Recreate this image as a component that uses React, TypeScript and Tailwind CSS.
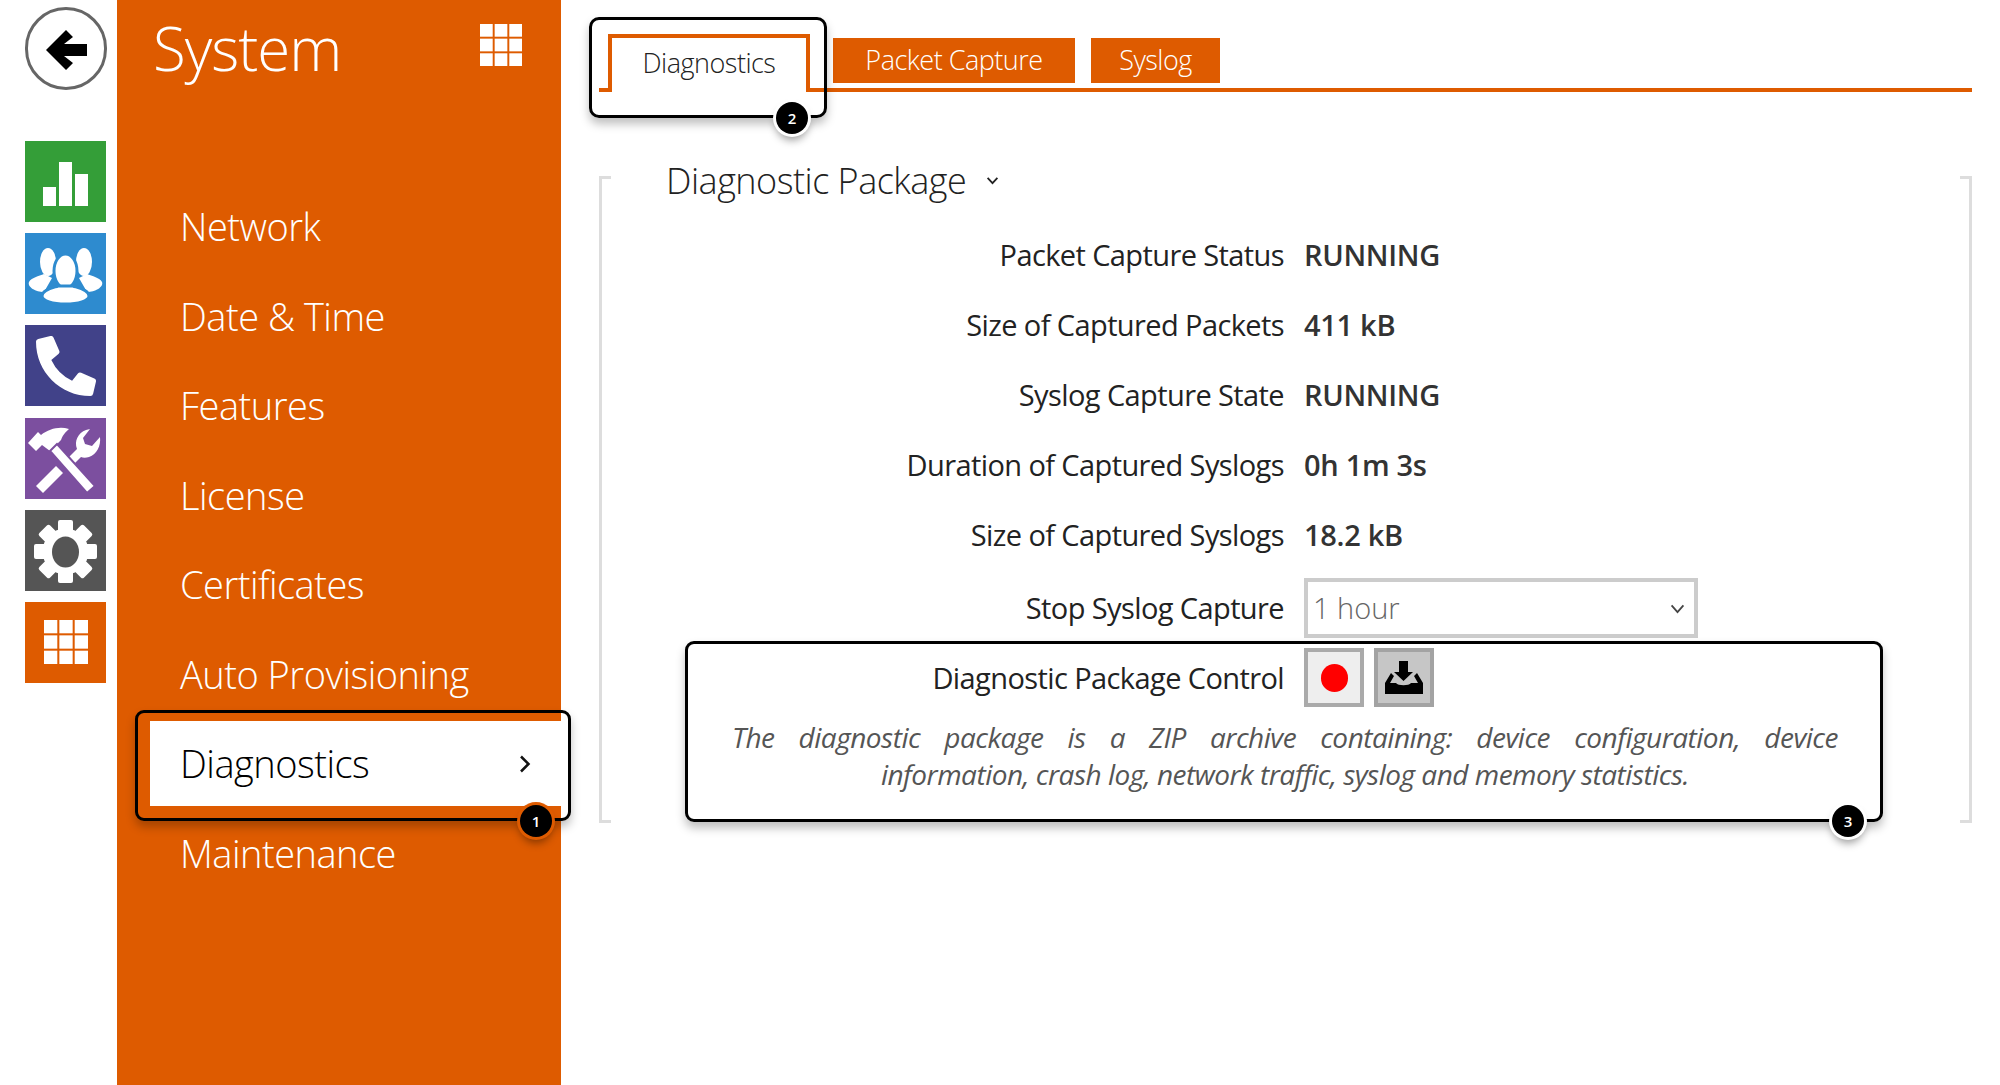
import React from "react";
import { FaPhoneAlt } from "react-icons/fa";

const menuItems = [
  "Network",
  "Date & Time",
  "Features",
  "License",
  "Certificates",
  "Auto Provisioning",
  "Diagnostics",
  "Maintenance",
];

const statusRows = [
  { label: "Packet Capture Status", value: "RUNNING" },
  { label: "Size of Captured Packets", value: "411 kB" },
  { label: "Syslog Capture State", value: "RUNNING" },
  { label: "Duration of Captured Syslogs", value: "0h 1m 3s" },
  { label: "Size of Captured Syslogs", value: "18.2 kB" },
];

const GridIcon = ({ className }: { className: string }) => (
  <svg viewBox="0 0 43 43" className={className} fill="#fff">
    {[0, 15, 30].map((y) =>
      [0, 15, 30].map((x) => <rect key={`${x}-${y}`} x={x} y={y} width="13" height="13" />)
    )}
  </svg>
);

const BackButton = () => (
  <div className="w-[82px] h-[83px] rounded-full border-[3px] border-[#666] bg-white">
    <svg viewBox="0 0 76 77" className="w-full h-full" fill="#000">
      <polygon points="18,40 38,20 45,27 36,34 59,34 59,46 36,46 45,53 38,60" />
    </svg>
  </div>
);

const Tile = ({ color, children }: { color: string; children: React.ReactNode }) => (
  <div className={`w-[81px] h-[81px] flex items-center justify-center ${color}`}>{children}</div>
);

const Badge = ({ n, className, ring }: { n: number; className: string; ring: string }) => (
  <div
    className={`absolute w-8 h-8 rounded-full bg-black text-white flex items-center justify-center text-[15px] font-semibold ${ring} ${className}`}
  >
    {n}
  </div>
);

const Row = ({ label, children, className }: { label: string; children: React.ReactNode; className: string }) => (
  <div className={`flex items-center ${className}`}>
    <div className="w-[685px] pr-0 text-right text-[29px] tracking-[-0.6px] text-[#222] whitespace-nowrap">{label}</div>
    <div className="ml-5">{children}</div>
  </div>
);

export default function App() {
  return (
    <div
      className="relative flex w-[2000px] h-[1085px] bg-white overflow-hidden"
      style={{ fontFamily: '"Open Sans", "Noto Sans", sans-serif' }}
    >
      {/* rail */}
      <div className="w-[117px] shrink-0 pl-[25px] pt-[7px]">
        <BackButton />
        <div className="mt-[51px] flex flex-col gap-[11.2px]">
          <Tile color="bg-[#349e38]">
            <svg viewBox="0 0 81 81" className="w-full h-full" fill="#fff">
              <rect x="18" y="46" width="13" height="19" />
              <rect x="34" y="21" width="13" height="44" />
              <rect x="50" y="33" width="13" height="32" />
            </svg>
          </Tile>
          <Tile color="bg-[#2e8bcf]">
            <svg viewBox="0 0 81 81" className="w-full h-full" fill="#fff">
              <ellipse cx="23" cy="29" rx="8" ry="14" />
              <ellipse cx="59" cy="29" rx="8" ry="14" />
              <path d="M4 49c2-4 10-6 15-8l8 4-8 14c-8 0-17-5-15-10z" />
              <path d="M77 49c-2-4-10-6-15-8l-8 4 8 14c8 0 17-5 15-10z" />
              <ellipse cx="40.5" cy="38" rx="11.5" ry="17" stroke="#2e8bcf" strokeWidth="3" />
              <path
                d="M17 63c0-6 10-8 16-10h15c6 2 16 4 16 10 0 5-11 8-23.500 8S17 68 17 63z"
                stroke="#2e8bcf"
                strokeWidth="3"
              />
            </svg>
          </Tile>
          <Tile color="bg-[#414289]">
            <FaPhoneAlt className="w-[60px] h-[60px] text-white -scale-x-100 rotate-90" />
          </Tile>
          <Tile color="bg-[#7c4f9f]">
            <svg viewBox="0 0 81 81" className="w-full h-full" fill="#fff">
              <path d="M44 39l8-8c-3-8 1-16 9-19l4-1-7 9 2 6 7 2 8-9c1 9-3 17-11 20-3 1-6 1-8 0l-8 8z" />
              <path d="M31 48l7 7-20 20-7-7z" />
              <path d="M3 25l8 8 6-6 8 6 11-11c2-6 6-9 8-11-10-3-20 0-28 6l-3-3z" />
              <path d="M25 33l7-7 38 42-8 7z" stroke="#7c4f9f" strokeWidth="2" />
            </svg>
          </Tile>
          <Tile color="bg-[#555555]">
            <svg viewBox="0 0 81 81" className="w-full h-full" fill="#fff">
              {[0, 45, 90, 135, 180, 225, 270, 315].map((deg) => (
                <rect key={deg} x="33" y="10" width="15" height="16" rx="2" transform={`rotate(${deg} 40.5 41.500)`} />
              ))}
              <circle cx="40.5" cy="41.500" r="23" />
              <ellipse cx="40.5" cy="42" rx="13.500" ry="15.500" fill="#555555" />
            </svg>
          </Tile>
          <Tile color="bg-[#de5b00]">
            <GridIcon className="w-[44px] h-[44px]" />
          </Tile>
        </div>
      </div>

      {/* system menu */}
      <div className="w-[444px] shrink-0 bg-[#de5b00]">
        <div className="h-[184px] flex items-start justify-between pl-9 pr-[39px]">
          <div className="text-[60px] leading-[96px] font-light text-white tracking-[-1px]">System</div>
          <GridIcon className="w-[42px] h-[42px] mt-6" />
        </div>
        <div className="pl-[33px] flex flex-col gap-[4.5px]">
          {menuItems.map((item) => (
            <div
              key={item}
              className={`h-[85px] pl-[30px] pr-[30px] flex items-center justify-between text-[38px] font-light tracking-[-0.5px] ${
                item === "Diagnostics" ? "bg-white text-black" : "text-white"
              }`}
            >
              {item}
              {item === "Diagnostics" && (
                <svg viewBox="0 0 12 18" className="w-3 h-[18px]" fill="none" stroke="#111" strokeWidth="2.5">
                  <polyline points="2,1.500 9.500,9 2,16.500" />
                </svg>
              )}
            </div>
          ))}
        </div>
      </div>

      {/* content */}
      <div className="flex-1 min-w-0 pl-[38px] pr-7 pt-[34px]">
        <div className="flex items-start h-[58px] border-b-4 border-[#de5b00] pl-[9px]">
          <div className="relative h-[58px] w-[202px] bg-white border-4 border-b-0 border-[#de5b00] flex justify-center pt-[5px] text-[27px] font-light tracking-[-0.5px] text-[#222]">
            Diagnostics
          </div>
          <div className="ml-[23px] mt-1 h-[45px] w-[242px] bg-[#de5b00] flex items-center justify-center text-[27px] font-light tracking-[-0.5px] text-white">
            Packet Capture
          </div>
          <div className="ml-4 mt-1 h-[45px] w-[129px] bg-[#de5b00] flex items-center justify-center text-[27px] font-light tracking-[-0.5px] text-white">
            Syslog
          </div>
        </div>

        <div className="relative mt-[50px] h-[681px]">
          <div className="absolute left-0 top-[34px] bottom-0 w-3 border-[3px] border-r-0 border-[#ddd]" />
          <div className="absolute right-0 top-[34px] bottom-0 w-3 border-[3px] border-l-0 border-[#ddd]" />

          <div className="h-[78px] pl-[67px] flex items-center text-[36px] font-light tracking-[-0.5px] text-[#222]">
            Diagnostic Package
            <svg viewBox="0 0 14 9" className="ml-5 w-[13px] h-2" fill="none" stroke="#222" strokeWidth="2">
              <polyline points="1.500,1 7,7 12.500,1" />
            </svg>
          </div>

          {statusRows.map((row) => (
            <Row key={row.label} label={row.label} className="h-[70px]">
              <span className="text-[29px] font-semibold text-[#333] tracking-[-0.3px]">{row.value}</span>
            </Row>
          ))}

          <Row label="Stop Syslog Capture" className="h-[60px] mt-2">
            <div className="relative w-[394px] h-[60px]">
              <select className="w-full h-full appearance-none bg-white border-4 border-[#cccccc] pl-[5px] text-[29px] font-light text-[#666] outline-none">
                <option>1 hour</option>
              </select>
              <svg
                viewBox="0 0 16 11"
                className="absolute right-[13px] top-[26px] w-[15px] h-[10px] pointer-events-none"
                fill="none"
                stroke="#444"
                strokeWidth="2"
              >
                <polyline points="1.500,1.500 8,9 14.500,1.500" />
              </svg>
            </div>
          </Row>

          <Row label="Diagnostic Package Control" className="h-[59px] mt-[10px]">
            <div className="flex gap-[10px]">
              <div className="w-[60px] h-[59px] bg-[#eeeeee] border-4 border-[#aaaaaa] flex items-center justify-center">
                <div className="w-[27px] h-[28px] rounded-full bg-[#ff0000]" />
              </div>
              <div className="w-[60px] h-[59px] bg-[#c6c6c6] border-4 border-[#a3a3a3] flex items-center justify-center">
                <svg viewBox="0 0 38 33" className="w-[38px] h-[33px]" fill="#000">
                  <polygon points="14,0 23,0 23,11 28,11 18.500,20 9,11 14,11" />
                  <path d="M6 12l3 3-4 7h6c2 3 13 3 15 0h7l-4-7 3-3 6 10v11H0V22z" />
                </svg>
              </div>
            </div>
          </Row>

          <p className="mt-3 ml-[133px] w-[1106px] text-[28px] leading-[37px] italic tracking-[-0.5px] text-[#555] text-justify [text-align-last:center]">
            <span className="block [text-align-last:justify]">
              The diagnostic package is a ZIP archive containing: device configuration, device
            </span>
            <span className="block">information, crash log, network traffic, syslog and memory statistics.</span>
          </p>
        </div>
      </div>

      {/* numbered callouts */}
      <div className="absolute left-[135px] top-[710px] w-[436px] h-[111px] border-[3px] border-black rounded-[9px] shadow-[0_6px_10px_rgba(0,0,0,0.25)]" />
      <div className="absolute left-[589px] top-[17px] w-[238px] h-[101px] border-[3px] border-black rounded-[10px] shadow-[0_6px_10px_rgba(0,0,0,0.25)]" />
      <div className="absolute left-[685px] top-[641px] w-[1198px] h-[181px] border-[3px] border-black rounded-[9px] shadow-[0_6px_10px_rgba(0,0,0,0.25)]" />
      <Badge n={1} className="left-[520px] top-[805px]" ring="shadow-[0_0_0_3px_#de5b00,0_6px_8px_rgba(0,0,0,0.4)]" />
      <Badge n={2} className="left-[776px] top-[102px]" ring="shadow-[0_0_0_3px_#fff,0_6px_8px_rgba(0,0,0,0.4)]" />
      <Badge n={3} className="left-[1832px] top-[805px]" ring="shadow-[0_0_0_3px_#fff,0_6px_8px_rgba(0,0,0,0.4)]" />
    </div>
  );
}
